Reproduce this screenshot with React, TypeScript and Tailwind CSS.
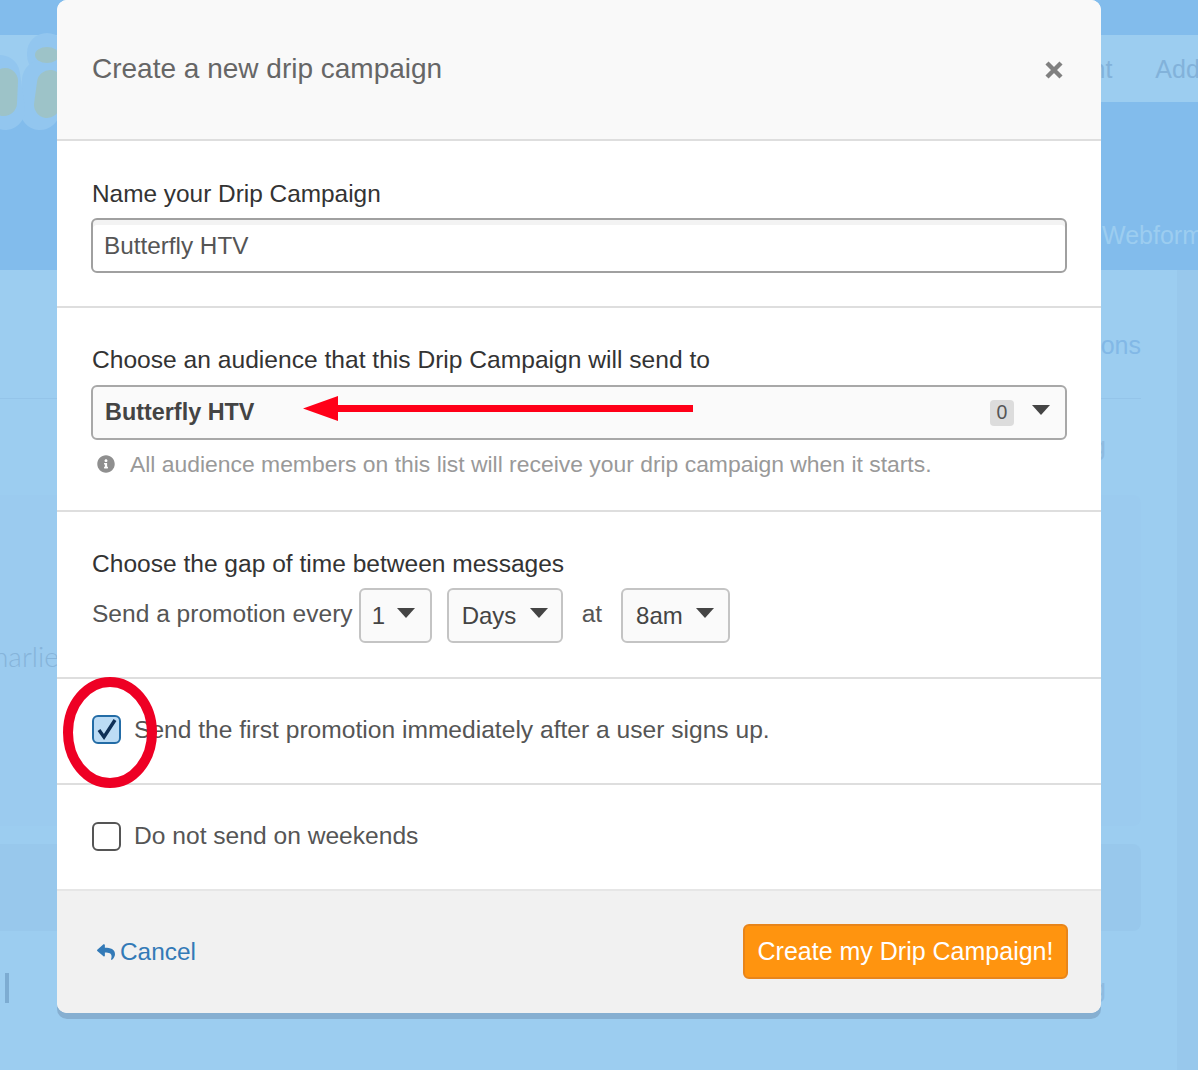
import { FaInfoCircle, FaReply } from 'react-icons/fa'

const FONT = "font-['Liberation_Sans',Arial,sans-serif]"

function Caret({ className = '' }: { className?: string }) {
  return (
    <svg width="20" height="12" viewBox="0 0 20 12" className={`shrink-0 ${className}`}>
      <path d="M1 1h18l-9 10z" fill="#444" />
    </svg>
  )
}

function SelectBox({ label, className }: { label: string; className: string }) {
  return (
    <div
      className={`flex h-[55px] items-center rounded-[6px] border-2 border-[#c4c4c4] bg-[#fafafa] text-[24px] text-[#444] ${className}`}
    >
      <span>{label}</span>
      <Caret className="-mt-[5px]" />
    </div>
  )
}

function Background() {
  return (
    <div className="h-[1070px] bg-[#9ccdf0]">
      <div className="h-[270px] bg-[#82bcec] pt-[35px]">
        <div className="flex h-[67px] items-center gap-[43px] overflow-hidden bg-[#9ccdf0] pt-[2px] pl-[1022px] text-[25px] text-[#82b2da]">
          <span className="shrink-0">Account</span>
          <span className="shrink-0">Add</span>
        </div>
        <div className="overflow-hidden pt-[118px] pl-[1102px] text-[25px] leading-[30px] whitespace-nowrap text-[#9ccdf0]">
          Webforms
        </div>
      </div>
      <div className="flex h-[800px]">
        <div className="w-[1141px] shrink-0">
          <div className="flex h-[129px] items-end justify-end border-b border-[#94c4e9] pb-[38px] text-[25px] leading-[30px] text-[#82b8e6]">
            Automations
          </div>
          <div className="flex h-[96px] justify-end pt-[32px] pr-[35px] text-[25px] leading-[30px] text-[#8fbbdf]">
            Sending
          </div>
          <div className="h-[331px] overflow-hidden rounded-r-[8px] bg-[#9bcbef] pt-[145px] font-['Lato',sans-serif] text-[28px] leading-[32px] font-light text-[#86b4da]">
            <span className="-ml-[26px] block">Charlie</span>
          </div>
          <div className="mt-[18px] h-[87px] rounded-r-[8px] bg-[#98c8ec]" />
          <div className="flex justify-end pt-[42px] pr-[35px] text-[25px] leading-[30px] text-[#8fbbdf]">
            <span className="mr-auto ml-[5px] h-[30px] w-[4px] bg-[#7dacd2]" />
            Sending
          </div>
        </div>
        <div className="w-[36px] shrink-0" />
        <div className="flex-1 bg-[#98c8ec]" />
      </div>
    </div>
  )
}

function Logo() {
  return (
    <svg width="57" height="140" viewBox="0 0 57 140" className="absolute top-0 left-0">
      <g fill="none" stroke="#92c6ef" strokeLinecap="round" strokeWidth="40">
        <path d="M47 53v2" />
        <path d="M42 80l-2 30" />
        <path d="M0 75l5 35" />
      </g>
      <g fill="none" stroke="#9dc3c8" strokeLinecap="round" strokeWidth="26">
        <ellipse cx="47" cy="55" rx="12" ry="8" fill="#9dc3c8" stroke="none" />
        <path d="M5 81L4 103" />
        <path d="M50 83l-3 22" />
      </g>
    </svg>
  )
}

export default function App() {
  return (
    <div className={`relative h-[1070px] w-[1198px] overflow-hidden ${FONT}`}>
      <Background />
      <Logo />

      <div className="absolute top-0 left-[57px] flex h-[1013px] w-[1044px] flex-col overflow-hidden rounded-[10px] bg-white shadow-[0_6px_0_#86afd1]">
        <div className="flex h-[141px] shrink-0 items-start justify-between border-b-2 border-[#dedede] bg-[#f9f9f9] pt-[52px] pr-[38px] pl-[35px]">
          <h1 className="text-[28px] leading-[34px] text-[#666]">Create a new drip campaign</h1>
          <svg width="20" height="20" viewBox="0 0 20 20" className="mt-[8px] -mr-px">
            <path d="M3 3l14 14M17 3L3 17" stroke="#808080" strokeWidth="4.4" />
          </svg>
        </div>

        <div className="h-[167px] shrink-0 border-b-2 border-[#dedede] px-[34px] pt-[38px]">
          <label className="block pl-px text-[24.4px] leading-[30px] text-[#333]">Name your Drip Campaign</label>
          <div className="mt-[9px] flex h-[55px] items-center rounded-[6px] border-2 border-[#a0a0a0] bg-white px-[11px] pt-[2px] text-[24.3px] text-[#555] shadow-[inset_0_5px_0_#f3f3f3]">
            Butterfly HTV
          </div>
        </div>

        <div className="h-[204px] shrink-0 border-b-2 border-[#dedede] px-[34px] pt-[37px]">
          <label className="block pl-px text-[24.6px] leading-[30px] text-[#333]">
            Choose an audience that this Drip Campaign will send to
          </label>
          <div className="mt-[10px] flex h-[55px] items-center justify-between rounded-[6px] border-2 border-[#a8a8a8] bg-[#fafafa] pr-[14px] pl-[12px]">
            <span className="text-[23.4px] font-bold text-[#444]">Butterfly HTV</span>
            <div className="flex items-center gap-[17px]">
              <span className="flex h-[26px] w-[24px] items-center justify-center rounded-[4px] bg-[#dcdcdc] text-[19.5px] text-[#555]">
                0
              </span>
              <Caret className="-mt-[5px]" />
            </div>
          </div>
          <p className="mt-[10px] flex items-center pl-[6px] text-[22.9px] leading-[28px] text-[#999]">
            <FaInfoCircle className="mr-[15px] text-[18px] text-[#8f8f8f]" />
            All audience members on this list will receive your drip campaign when it starts.
          </p>
        </div>

        <div className="h-[167px] shrink-0 border-b-2 border-[#dedede] px-[35px] pt-[37px]">
          <label className="block text-[24.55px] leading-[30px] text-[#333]">Choose the gap of time between messages</label>
          <div className="mt-[9px] flex items-center text-[24.55px] text-[#555]">
            <span className="-mt-[3px]">Send a promotion every</span>
            <SelectBox label="1" className="ml-[6px] w-[73px] gap-[11px] pl-[11px]" />
            <SelectBox label="Days" className="ml-[15px] w-[116px] gap-[13px] pl-[13px]" />
            <span className="-mt-[3px] ml-[19px]">at</span>
            <SelectBox label="8am" className="ml-[19px] w-[109px] gap-[12px] pl-[13px]" />
          </div>
        </div>

        <label className="flex h-[106px] shrink-0 items-center gap-[13px] border-b-2 border-[#dedede] px-[35px] pb-[4px] text-[24.6px] text-[#555]">
          <span className="flex h-[29px] w-[29px] shrink-0 items-center justify-center rounded-[6px] border-2 border-[#236ca6] bg-[#bcdcf5]">
            <svg width="22" height="22" viewBox="0 0 22 22">
              <path d="M3 12l5 7L19 2" fill="none" stroke="#0f3057" strokeWidth="3.4" />
            </svg>
          </span>
          <span className="mt-[2px]">Send the first promotion immediately after a user signs up.</span>
        </label>

        <label className="flex h-[106px] shrink-0 items-center gap-[13px] border-b-2 border-[#e6e6e6] px-[35px] pb-[2px] text-[24.6px] text-[#555]">
          <span className="h-[29px] w-[29px] shrink-0 rounded-[6px] border-2 border-[#555] bg-white" />
          Do not send on weekends
        </label>

        <div className="flex flex-1 items-start justify-between bg-[#f1f1f1] pt-[33px] pr-[33px] pl-[40px]">
          <a className="mt-[11px] flex items-center gap-[5px] text-[24.4px] leading-[34px] text-[#337ab7]">
            <FaReply className="text-[18px]" />
            Cancel
          </a>
          <button
            type="button"
            className="flex h-[55px] w-[325px] items-center justify-center rounded-[6px] border-2 border-[#e8851a] bg-[#ff940f] text-[25px] text-white"
          >
            Create my Drip Campaign!
          </button>
        </div>
      </div>

      <svg width="392" height="28" viewBox="0 0 392 28" className="absolute top-[395px] left-[302px]">
        <path d="M1 13.5L36 1v9h355v7H36v9z" fill="#ff0018" />
      </svg>

      <svg width="104" height="121" viewBox="0 0 104 121" className="absolute top-[672px] left-[58px]">
        <ellipse cx="52" cy="60.5" rx="42" ry="50.5" fill="none" stroke="#ee0024" strokeWidth="10" />
      </svg>
    </div>
  )
}
